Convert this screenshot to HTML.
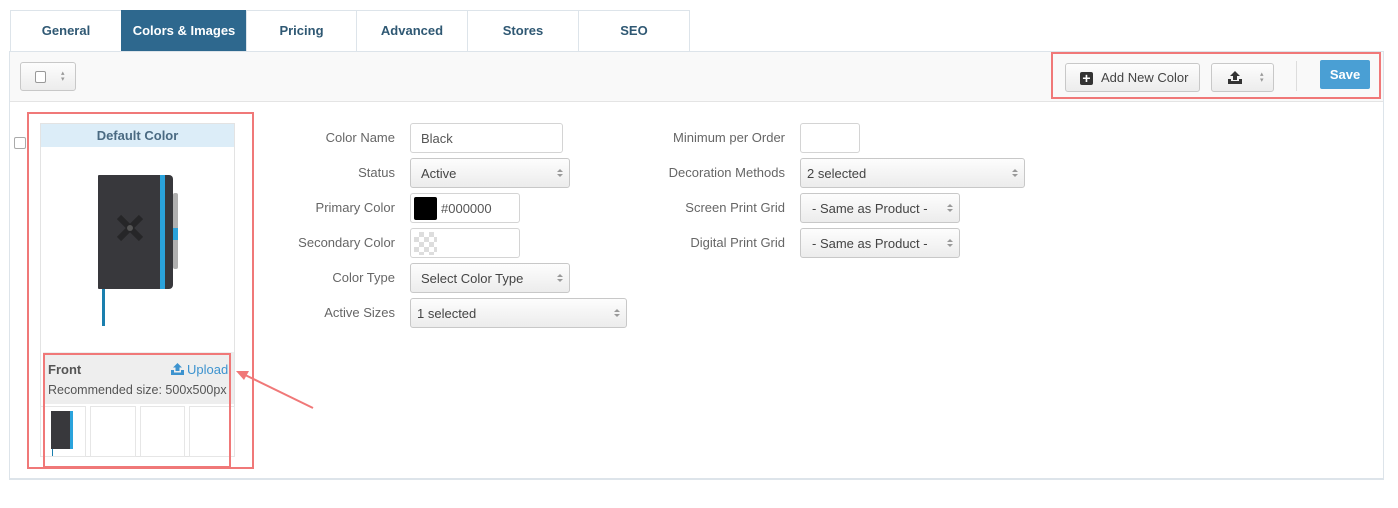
<!DOCTYPE html>
<html><head><style>
*{box-sizing:border-box;margin:0;padding:0}
body{width:1398px;height:508px;background:#fff;font-family:"Liberation Sans",sans-serif;font-size:13px;color:#555;position:relative;overflow:hidden}
.a{position:absolute}
.tab{position:absolute;top:10px;height:42px;border:1px solid #dde4ea;border-bottom:none;font-weight:bold;color:#2f5873;font-size:13px;text-align:center;line-height:40px;background:#fff}
.btn{position:absolute;border:1px solid #c8c8c8;border-radius:3px;background:linear-gradient(#fdfdfd,#ececec)}
.inp{position:absolute;border:1px solid #d4d4d4;border-radius:3px;background:#fff;height:30px;line-height:30px;padding-left:10px;color:#555}
.sel{position:absolute;border:1px solid #c8c8c8;border-radius:3px;background:linear-gradient(#fdfdfd,#ececec);height:30px;line-height:30px;padding-left:10px;color:#444}
.sel:after{content:"";position:absolute;right:6px;top:10px;width:0;height:0;border-left:3px solid transparent;border-right:3px solid transparent;border-bottom:3px solid #999}
.sel:before{content:"";position:absolute;right:6px;top:15px;width:0;height:0;border-left:3px solid transparent;border-right:3px solid transparent;border-top:3px solid #999}
.lbl{position:absolute;text-align:right;color:#666;font-size:13px}
.red{position:absolute;border:2px solid #f07878}
</style></head><body>
<div class="tab" style="left:10px;width:112px">General</div>
<div class="tab" style="left:121px;width:126px;background:#2e688e;color:#fff;border-color:#2e688e">Colors &amp; Images</div>
<div class="tab" style="left:246px;width:111px">Pricing</div>
<div class="tab" style="left:356px;width:112px">Advanced</div>
<div class="tab" style="left:467px;width:112px">Stores</div>
<div class="tab" style="left:578px;width:112px">SEO</div>
<div class="a" style="left:9px;top:51px;width:1375px;height:429px;border:1px solid #dde4ea;border-bottom:2px solid #dde4ea"></div>
<div class="a" style="left:10px;top:52px;width:1373px;height:50px;background:#f9f9f9;border-bottom:1px solid #e4e4e4"></div>
<div class="btn" style="left:20px;top:62px;width:56px;height:29px"><div class="a" style="left:14px;top:8px;width:11px;height:12px;border:1px solid #999;border-radius:2px;background:#fff"></div><div class="a" style="left:40px;top:8px;font-size:7px;color:#999;line-height:6px">▴<br>▾</div></div>
<div class="btn" style="left:1065px;top:63px;width:135px;height:29px;color:#444;font-size:13px;line-height:27px;padding-left:35px">Add New Color<div class="a" style="left:14px;top:8px;width:13px;height:13px;background:#333;border-radius:2px;color:#fff;font-weight:bold;font-size:14px;line-height:13px;text-align:center">+</div></div>
<div class="btn" style="left:1211px;top:63px;width:63px;height:29px"><svg class="a" style="left:15px;top:6px" width="16" height="15" viewBox="0 0 16 15"><path d="M8 1 L3 6 H6 V10 H10 V6 H13Z M1 9 V14 H15 V9 H12 V11 H4 V9Z" fill="#333"/></svg><div class="a" style="left:48px;top:8px;font-size:7px;color:#999;line-height:6px">▴<br>▾</div></div>
<div class="a" style="left:1296px;top:61px;width:1px;height:30px;background:#ddd"></div>
<div class="a" style="left:1320px;top:60px;width:50px;height:29px;background:#4a9fd4;border-radius:2px;color:#fff;font-weight:bold;text-align:center;line-height:29px">Save</div>
<div class="red" style="left:1051px;top:52px;width:330px;height:47px"></div>

<div class="a" style="left:14px;top:137px;width:12px;height:12px;border:1px solid #aaa;border-radius:2px;background:#fff"></div>
<div class="a" style="left:40px;top:123px;width:195px;height:334px;border:1px solid #e3e3e3"></div>
<div class="a" style="left:41px;top:124px;width:193px;height:23px;background:#dcedf8;color:#4a6a82;font-weight:bold;text-align:center;line-height:23px">Default Color</div>
<div class="a" style="left:102px;top:288px;width:3px;height:38px;background:#1a7fae"></div>
<div class="a" style="left:98px;top:175px;width:75px;height:114px;background:#38383c;border-radius:1px 4px 4px 1px"></div>
<div class="a" style="left:160px;top:175px;width:5px;height:114px;background:#2aa3dc"></div>
<div class="a" style="left:173px;top:193px;width:5px;height:76px;background:#b0b0b0;border-radius:2px"></div>
<div class="a" style="left:173px;top:228px;width:5px;height:12px;background:#2aa3dc"></div>
<svg class="a" style="left:115px;top:213px" width="30" height="30" viewBox="0 0 30 30"><path d="M4 4 L26 26 M26 4 L4 26" stroke="#262628" stroke-width="6"/><circle cx="15" cy="15" r="3" fill="#555"/></svg>
<div class="a" style="left:43px;top:352px;width:191px;height:52px;background:#eee"></div>
<div class="a" style="left:48px;top:362px;font-weight:bold;color:#555">Front</div>
<svg class="a" style="left:171px;top:363px" width="13" height="12" viewBox="0 0 13 12"><path d="M6.5 0 L2 4.5 H4.5 V8 H8.5 V4.5 H11Z M0 7 V12 H13 V7 H10 V9.5 H3 V7Z" fill="#3d93cf"/></svg>
<div class="a" style="left:187px;top:362px;color:#3d93cf">Upload</div>
<div class="a" style="left:48px;top:383px;color:#555;font-size:12.5px">Recommended size: 500x500px</div>
<div class="a" style="left:40px;top:406px;width:46px;height:51px;border:1px solid #e6e6e6"><div class="a" style="left:10px;top:4px;width:22px;height:38px;background:#38383c;border-right:3px solid #2aa3dc"></div><div class="a" style="left:11px;top:42px;width:1px;height:7px;background:#1a7fae"></div></div>
<div class="a" style="left:90px;top:406px;width:46px;height:51px;border:1px solid #e6e6e6"></div>
<div class="a" style="left:140px;top:406px;width:45px;height:51px;border:1px solid #e6e6e6"></div>
<div class="a" style="left:189px;top:406px;width:46px;height:51px;border:1px solid #e6e6e6"></div>
<div class="red" style="left:27px;top:112px;width:227px;height:357px"></div>
<div class="red" style="left:43px;top:353px;width:188px;height:115px"></div>
<svg class="a" style="left:230px;top:362px" width="90" height="52"><path d="M83 46 L9 10" stroke="#f07878" stroke-width="2"/><path d="M6 9 L19 9 L14 18Z" fill="#f07878"/></svg>

<div class="lbl" style="left:250px;width:145px;top:130px">Color Name</div>
<div class="lbl" style="left:250px;width:145px;top:165px">Status</div>
<div class="lbl" style="left:250px;width:145px;top:200px">Primary Color</div>
<div class="lbl" style="left:250px;width:145px;top:235px">Secondary Color</div>
<div class="lbl" style="left:250px;width:145px;top:270px">Color Type</div>
<div class="lbl" style="left:250px;width:145px;top:305px">Active Sizes</div>
<div class="inp" style="left:410px;top:123px;width:153px">Black</div>
<div class="sel" style="left:410px;top:158px;width:160px">Active</div>
<div class="inp" style="left:410px;top:193px;width:110px;padding-left:30px">#000000<div class="a" style="left:3px;top:3px;width:23px;height:23px;background:#000;border-radius:2px"></div></div>
<div class="inp" style="left:410px;top:228px;width:110px"><div class="a" style="left:3px;top:3px;width:23px;height:23px;border-radius:2px;background:repeating-conic-gradient(#ddd 0 25%,#fff 0 50%) 0 0/10px 10px"></div></div>
<div class="sel" style="left:410px;top:263px;width:160px">Select Color Type</div>
<div class="sel" style="left:410px;top:298px;width:217px;padding-left:6px">1 selected</div>

<div class="lbl" style="left:620px;width:165px;top:130px">Minimum per Order</div>
<div class="lbl" style="left:620px;width:165px;top:165px">Decoration Methods</div>
<div class="lbl" style="left:620px;width:165px;top:200px">Screen Print Grid</div>
<div class="lbl" style="left:620px;width:165px;top:235px">Digital Print Grid</div>
<div class="inp" style="left:800px;top:123px;width:60px"></div>
<div class="sel" style="left:800px;top:158px;width:225px;padding-left:6px">2 selected</div>
<div class="sel" style="left:800px;top:193px;width:160px;padding-left:11px">- Same as Product -</div>
<div class="sel" style="left:800px;top:228px;width:160px;padding-left:11px">- Same as Product -</div>
</body></html>
